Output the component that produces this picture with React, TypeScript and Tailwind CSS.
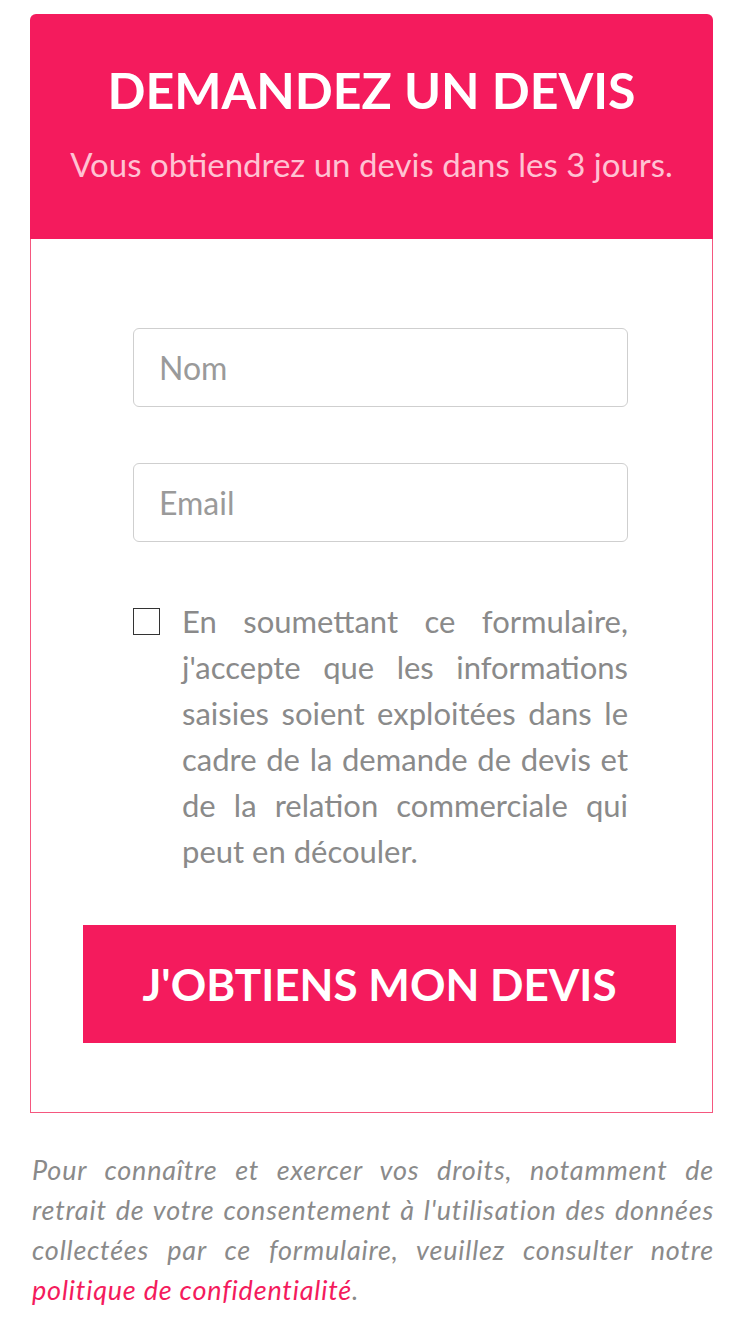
import * as React from "react"

const pink = "bg-[#f41b5d]"

export default function App() {
  const [agreed, setAgreed] = React.useState(false)

  return (
    <div className="min-h-[1330px] bg-white pt-[14px] px-[23px] font-['Lato',sans-serif]">
      <div className="w-[683px] ml-[7px]">
        {/* Header */}
        <div className={`${pink} h-[225px] rounded-t-[6px] flex flex-col items-center pt-[48px]`}>
          <h2 className="text-[50px] leading-[56px] font-bold text-white">
            DEMANDEZ UN DEVIS
          </h2>
          <p className="mt-[26px] text-[33px] leading-[40px] text-[#ffc2d3]">
            Vous obtiendrez un devis dans les 3 jours.
          </p>
        </div>

        {/* Form body */}
        <div className="border border-t-0 border-[#f5577f] pt-[89px] pb-[69px] pl-[52px] pr-[36px]">
          <div className="flex flex-col gap-[56px] pl-[50px] pr-[48px]">
            <input
              type="text"
              placeholder="Nom"
              className="h-[79px] w-full rounded-[6px] border border-[#cfcfcf] px-[25px] text-[32px] text-gray-700 placeholder:text-[#9a9a9a] outline-none"
            />
            <input
              type="email"
              placeholder="Email"
              className="h-[79px] w-full rounded-[6px] border border-[#cfcfcf] px-[25px] text-[32px] text-gray-700 placeholder:text-[#9a9a9a] outline-none"
            />
          </div>

          <label className="mt-[56px] flex items-start gap-[22px] pl-[50px] pr-[48px]">
            <input
              type="checkbox"
              checked={agreed}
              onChange={(e) => setAgreed(e.target.checked)}
              className="mt-[10px] h-[27px] w-[27px] shrink-0 appearance-none border border-[#333] bg-white"
            />
            <span className="text-[31px] leading-[46px] text-[#8a8a8a] text-justify">
              En soumettant ce formulaire, j'accepte que les informations saisies soient exploitées dans le cadre de la demande de devis et de la relation commerciale qui peut en découler.
            </span>
          </label>

          <button
            type="submit"
            className={`${pink} mt-[51px] h-[118px] w-full text-white text-[44px] font-bold`}
          >
            J'OBTIENS MON DEVIS
          </button>
        </div>
      </div>

      {/* Footer note */}
      <p className="mt-[37px] ml-[9px] w-[682px] text-[27px] leading-[40px] tracking-[0.8px] italic text-[#8a8a8a] text-justify">
        Pour connaître et exercer vos droits, notamment de retrait de votre consentement à l'utilisation des données collectées par ce formulaire, veuillez consulter notre{" "}
        <a href="#" className="text-[#f41b5d]">politique de confidentialité</a>.
      </p>
    </div>
  )
}
